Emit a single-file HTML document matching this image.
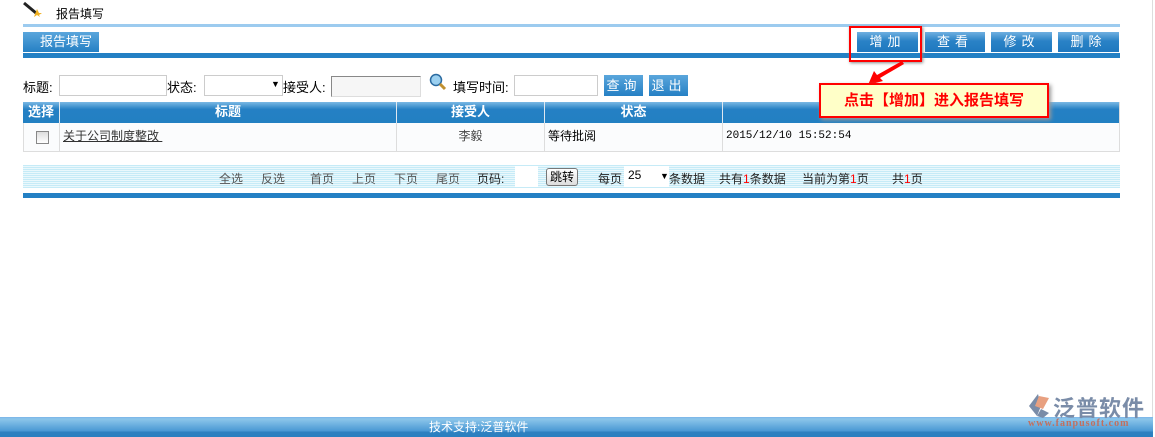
<!DOCTYPE html>
<html><head><meta charset="utf-8"><style>
*{margin:0;padding:0;box-sizing:border-box}
body{width:1155px;height:437px;position:relative;overflow:hidden;background:#fff;font-family:"Liberation Sans","Noto Sans CJK SC",sans-serif;font-size:12px;color:#000}
.a{position:absolute}
.btn{position:absolute;top:32px;height:20px;background:linear-gradient(#6fb0e0,#2a82c6 45%,#1f78bf);color:#fff;font-size:13px;text-align:center;line-height:20px;letter-spacing:5px}
.inp{position:absolute;height:21px;border:1px solid #ccc;background:#fff}
.th{position:absolute;top:102px;height:21px;background:linear-gradient(#7ab8e4,#2580c4 35%,#2280c2);color:#fff;font-weight:bold;font-size:13px;text-align:center;line-height:20px;border-right:1px solid #dfe8f0}
.td{position:absolute;top:123px;height:28px;line-height:27px;border-right:1px solid #ddd;background:#fbfcfd}
.pg{position:absolute;top:170px;font-size:12px;color:#222}
.lb{position:absolute;top:77px;font-size:13px}
.sb{position:absolute;top:75px;height:21px;background:linear-gradient(#5aa6dc,#2580c4);color:#fff;font-size:13px;text-align:center;line-height:21px;letter-spacing:4px}
</style></head><body>
<svg class="a" style="left:22px;top:1px" width="20" height="16"><line x1="2" y1="2" x2="14" y2="12" stroke="#222" stroke-width="3"/><polygon points="15,8 17,12 20,12 17,14 18,16 15,14 12,16 13,13" fill="#f0b020"/></svg>
<div class="a" style="left:56px;top:5px;font-size:12px">报告填写</div>
<div class="a" style="left:23px;top:24px;width:1097px;height:3px;background:#9ccbef"></div>
<div class="a" style="left:23px;top:32px;width:76px;height:20px;background:linear-gradient(#5aa6dc,#2580c4);color:#fff;font-size:13px;line-height:20px;padding-left:17px">报告填写</div>
<div class="a" style="left:23px;top:52px;width:1097px;height:6px;background:#2380c4;border-top:1px solid #fff"></div>
<div class="btn" style="left:857px;width:61px">增加</div>
<div class="btn" style="left:925px;width:60px">查看</div>
<div class="btn" style="left:991px;width:61px">修改</div>
<div class="btn" style="left:1058px;width:61px">删除</div>

<div class="lb" style="left:23px">标题:</div>
<div class="inp" style="left:59px;top:75px;width:108px"></div>
<div class="lb" style="left:167px">状态:</div>
<div class="inp" style="left:204px;top:75px;width:79px"></div>
<div class="a" style="left:271px;top:79px;font-size:9px">▼</div>
<div class="lb" style="left:283px">接受人:</div>
<div class="inp" style="left:331px;top:76px;width:90px;background:#f6f6f6;border-color:#888 #ddd #ddd #888"></div>
<svg class="a" style="left:429px;top:73px" width="18" height="18"><circle cx="7" cy="7" r="5.5" fill="#9bd0f0" stroke="#2a6aa0" stroke-width="1.5"/><line x1="11" y1="11" x2="16" y2="16" stroke="#c09030" stroke-width="3"/></svg>
<div class="lb" style="left:453px">填写时间:</div>
<div class="inp" style="left:514px;top:75px;width:84px"></div>
<div class="sb" style="left:604px;top:75px;width:39px">查询</div>
<div class="sb" style="left:649px;top:75px;width:39px">退出</div>

<div class="a" style="left:23px;top:102px;width:1097px;height:50px;border:1px solid #ddd"></div>
<div class="th" style="left:23px;width:37px">选择</div>
<div class="th" style="left:60px;width:337px">标题</div>
<div class="th" style="left:397px;width:148px">接受人</div>
<div class="th" style="left:545px;width:178px">状态</div>
<div class="th" style="left:723px;width:396px;border-right:0"></div>
<div class="td" style="left:24px;width:36px"><div class="a" style="left:12px;top:8px;width:13px;height:13px;border:1px solid #888;background:linear-gradient(#ddd,#fff)"></div></div>
<div class="td" style="left:60px;width:337px;padding-left:3px"><span style="text-decoration:underline;color:#333">关于公司制度整改&nbsp;</span></div>
<div class="td" style="left:397px;width:148px;text-align:center;color:#444">李毅</div>
<div class="td" style="left:545px;width:178px;padding-left:3px">等待批阅</div>
<div class="td" style="left:723px;width:396px;border-right:0;padding-left:3px;font-size:11px;font-family:'Liberation Mono',monospace">2015/12/10 15:52:54</div>

<div class="a" style="left:849px;top:26px;width:73px;height:36px;border:2px solid #f00;box-shadow:1px 1px 3px #888;z-index:5"></div>
<svg class="a" style="left:860px;top:58px;z-index:5" width="50" height="30"><polygon points="8,27 14,13 17,17 42,3 44,6 20,20 23,23" fill="#f00"/></svg>
<div class="a" style="left:819px;top:83px;width:230px;height:35px;border:2px solid #f00;background:#ffffc8;color:#f00;font-weight:bold;font-size:15px;line-height:31px;text-align:center;box-shadow:2px 2px 4px #999;z-index:5">点击【增加】进入报告填写</div>

<div class="a" style="left:23px;top:165px;width:1097px;height:23px;background:repeating-linear-gradient(#c6ebf7 0 1px,#eaf8fc 1px 2px)"></div>
<div class="pg" style="left:219px;color:#555">全选</div>
<div class="pg" style="left:261px;color:#555">反选</div>
<div class="pg" style="left:310px;color:#555">首页</div>
<div class="pg" style="left:352px;color:#555">上页</div>
<div class="pg" style="left:394px;color:#555">下页</div>
<div class="pg" style="left:436px;color:#555">尾页</div>
<div class="pg" style="left:477px">页码:</div>
<div class="a" style="left:515px;top:166px;width:23px;height:21px;background:#fff"></div>
<div class="a" style="left:546px;top:168px;width:32px;height:18px;border:1px solid #777;border-radius:3px;background:linear-gradient(#fff,#ddd);text-align:center;line-height:16px;font-size:12px">跳转</div>
<div class="pg" style="left:598px">每页</div>
<div class="a" style="left:624px;top:166px;width:45px;height:21px;background:#fff;font-size:12px;padding:2px 0 0 4px">25</div>
<div class="a" style="left:660px;top:171px;font-size:9px">▼</div>
<div class="pg" style="left:669px">条数据</div>
<div class="pg" style="left:719px">共有<span style="color:red">1</span>条数据</div>
<div class="pg" style="left:802px">当前为第<span style="color:red">1</span>页</div>
<div class="pg" style="left:892px">共<span style="color:red">1</span>页</div>
<div class="a" style="left:23px;top:193px;width:1097px;height:5px;background:#2380c4"></div>

<div class="a" style="left:1152px;top:0;width:1px;height:437px;background:#ddd"></div>
<div class="a" style="left:0;top:417px;width:1153px;height:20px;background:linear-gradient(#7ab4e8 0,#8cc6ea 2px,#4a98d4 14px,#2e80c0 15px,#2a7fc0);color:#fff;font-size:12px;line-height:20px"><span style="position:absolute;left:429px">技术支持:泛普软件</span></div>
<svg class="a" style="left:1025px;top:393px" width="26" height="26"><path d="M13 1 L4 13 L12 23 L16 13 Z" fill="#7a8ca8"/><path d="M14 3 L24 5 L18 16 L10 13Z" fill="#e8a080"/><path d="M16 16 L24 20 L18 25 L12 23Z" fill="#7a8ca8"/></svg>
<div class="a" style="left:1053px;top:391px;font-size:22px;color:#7a8ca8;font-weight:bold;letter-spacing:1px">泛普软件</div>
<div class="a" style="left:1028px;top:418px;font-size:10px;color:#c07060;font-family:'Liberation Serif',serif;font-weight:bold;letter-spacing:1px">www.fanpusoft.com</div>
</body></html>
